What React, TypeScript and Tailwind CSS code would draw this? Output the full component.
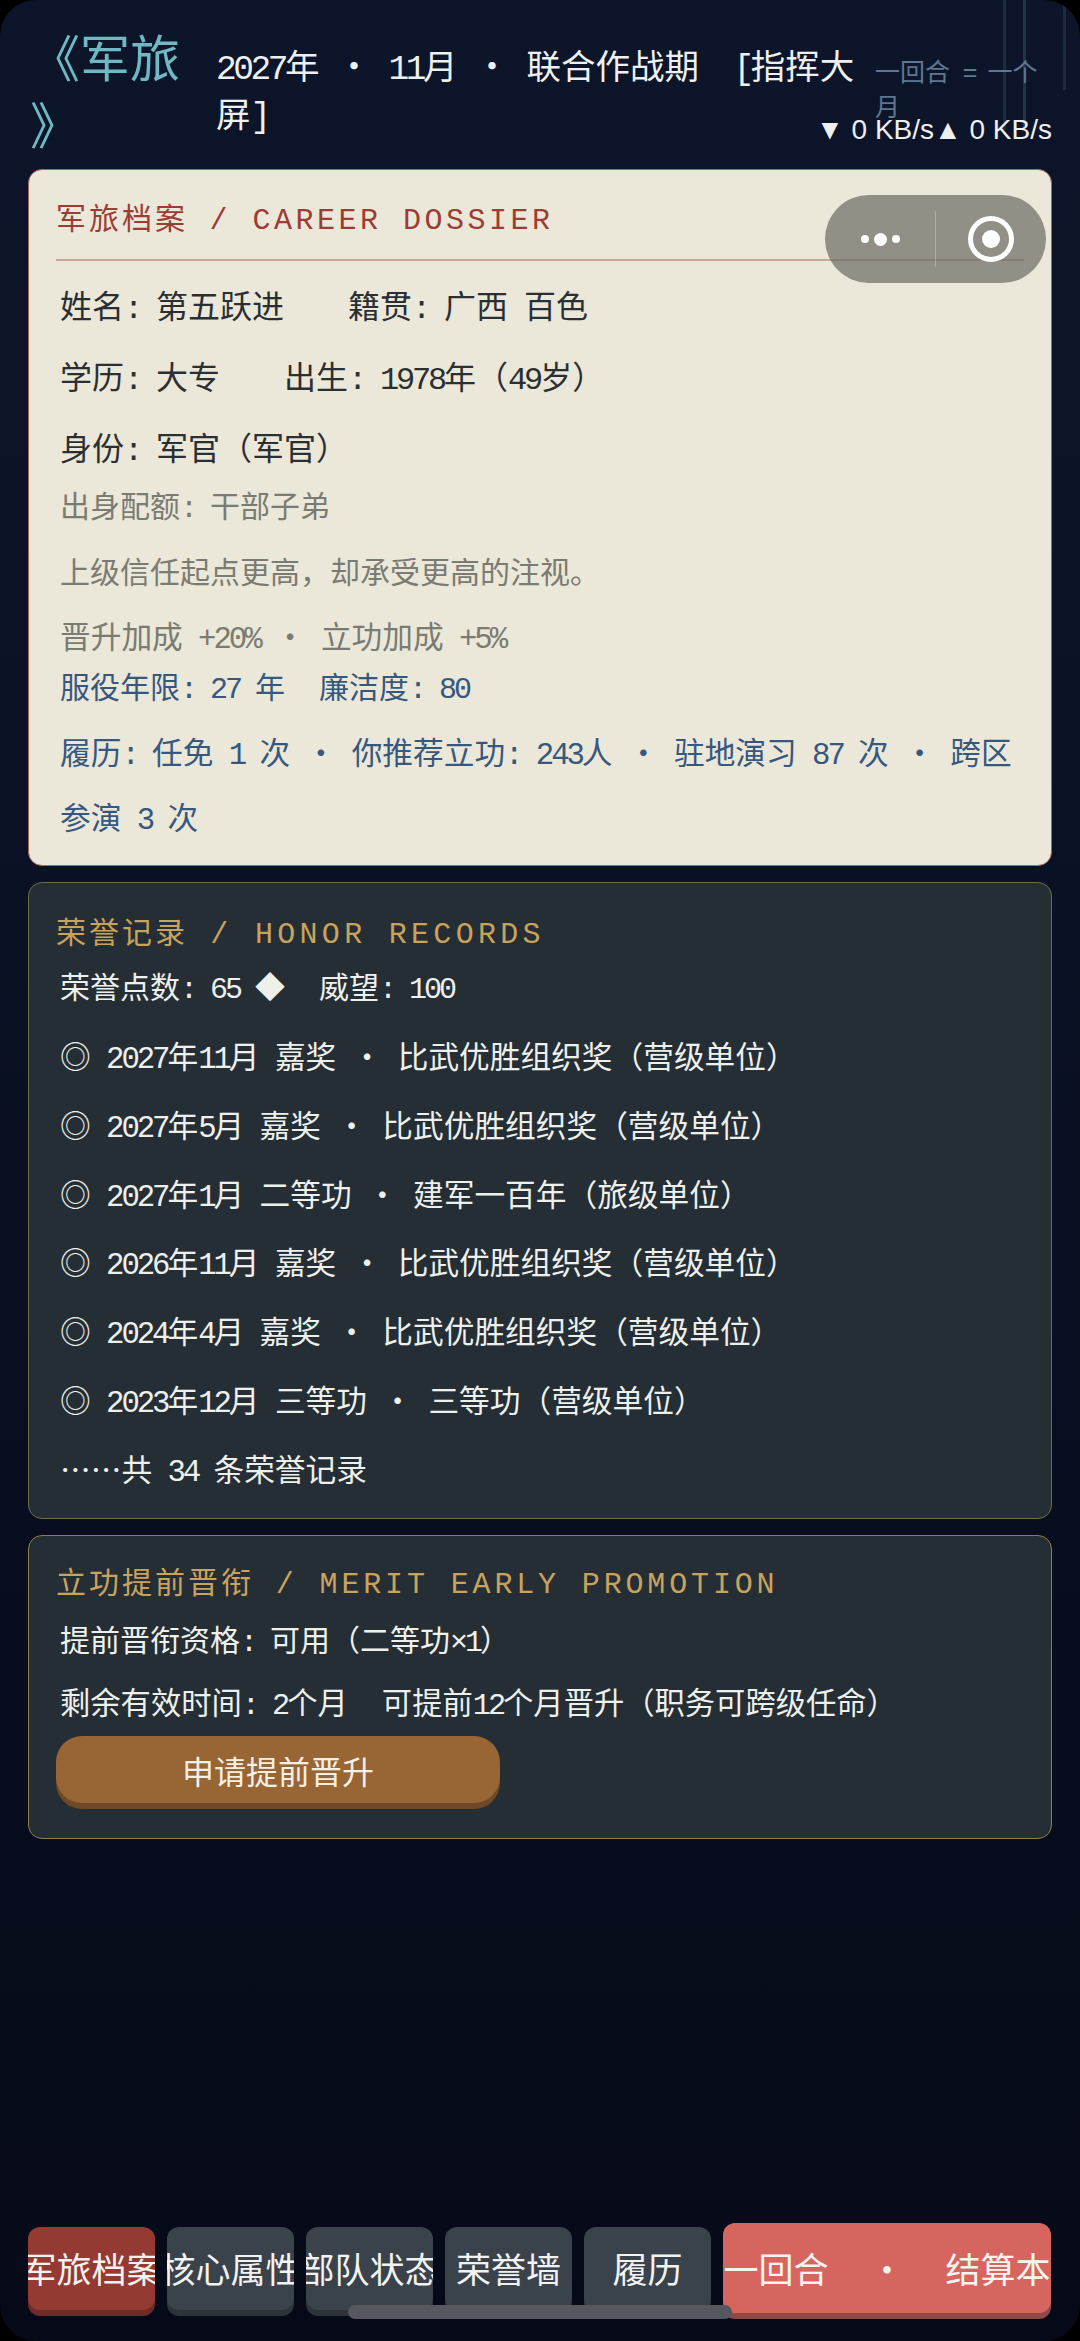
import React from "react";

const SANS = "font-['Noto_Sans_CJK_SC','Noto_Sans',sans-serif]";

function T({ s }: { s: string }) {
  const parts = s.split(/([\x20-\x7e×]+|·)/).filter(Boolean);
  return (
    <>
      {parts.map((p, i) =>
        p === "·" ? (
          <span key={i} className="inline-block w-[1em] text-center leading-none">·</span>
        ) : /^[\x20-\x7e×]+$/.test(p) ? (
          <span key={i} className="font-['Liberation_Mono',monospace] tracking-[-0.1em] leading-none whitespace-pre-wrap">{p}</span>
        ) : (
          <span key={i}>{p}</span>
        )
      )}
    </>
  );
}

function Title({ zh, en, color, track }: { zh: string; en: string; color: string; track: string }) {
  return (
    <div className={`whitespace-nowrap text-[30px] leading-[48px] tracking-[3px] ${color}`}>
      <span>{zh}</span>
      <span className={`font-['Liberation_Mono',monospace] leading-none ${track}`}> / {en}</span>
    </div>
  );
}

const honors = [
  "2027年11月 嘉奖 · 比武优胜组织奖\uFF08营级单位\uFF09",
  "2027年5月 嘉奖 · 比武优胜组织奖\uFF08营级单位\uFF09",
  "2027年1月 二等功 · 建军一百年\uFF08旅级单位\uFF09",
  "2026年11月 嘉奖 · 比武优胜组织奖\uFF08营级单位\uFF09",
  "2024年4月 嘉奖 · 比武优胜组织奖\uFF08营级单位\uFF09",
  "2023年12月 三等功 · 三等功\uFF08营级单位\uFF09",
];

const tabs = ["军旅档案", "核心属性", "部队状态", "荣誉墙", "履历"];

export default function App() {
  return (
    <div className="bg-black">
      <div className={`relative flex h-[2341px] w-[1080px] flex-col overflow-hidden rounded-[36px] bg-gradient-to-b from-[#0d152a] via-[#0a1022] to-[#060a18] ${SANS}`}>
        {/* decorative lines */}
        <div className="absolute left-[1003px] top-0 h-[130px] w-[3px] bg-[#1c2c40]" />
        <div className="absolute left-[1023px] top-0 h-[130px] w-[3px] bg-[#22344a]" />
        <div className="absolute left-[1063px] top-0 h-[90px] w-[3px] bg-[#1c2c40]" />

        {/* header */}
        <header className="flex h-[169px] pl-[30px] pr-[28px] pt-[22px]">
          <div className="w-[186px] shrink-0 pr-[30px] text-[50px] leading-[67px] text-[#6fb9c4] [line-break:anywhere]">《军旅》</div>
          <div className="w-[659px] shrink-0 pt-[18px] text-[34.5px] leading-[48px] text-[#eef0f0]">
            <T s="2027年 · 11月 · 联合作战期  [指挥大屏]" />
          </div>
          <div className="relative min-w-0 flex-1">
            <div className="w-[180px] pt-[31px] text-[25px] leading-[35px] text-[#5e7892]">
              <T s="一回合 = 一个月" />
            </div>
            <div className="absolute right-0 top-[91px] whitespace-nowrap font-['Liberation_Sans',sans-serif] text-[28px] leading-[34px] text-[#eef0f0]">▼ 0 KB/s▲ 0 KB/s</div>
          </div>
        </header>

        <main className="flex flex-col gap-[16px] px-[28px]">
          {/* dossier */}
          <section className="rounded-[14px] border border-[#a8655a] bg-[#ebe7d9] px-[27px] pb-[17px] pt-[22px]">
            <Title zh="军旅档案" en="CAREER DOSSIER" color="text-[#9b3d34]" track="tracking-[3.5px]" />
            <div className="mt-[19px] border-t-2 border-[#c9a79c]" />
            <div className="mt-[7px] px-[4px] text-[#2a2f33]">
              <div className="flex gap-[64px] text-[32px] leading-[72px]"><span><T s="姓名: 第五跃进" /></span><span><T s="籍贯: 广西 百色" /></span></div>
              <div className="flex gap-[64px] text-[32px] leading-[71px]"><span><T s="学历: 大专" /></span><span><T s={"出生: 1978年\uFF0849岁\uFF09"} /></span></div>
              <div className="text-[32px] leading-[71px]"><T s={"身份: 军官\uFF08军官\uFF09"} /></div>
              <div className="text-[30px] leading-[44px] text-[#7a7b72]"><T s="出身配额: 干部子弟" /></div>
              <div className="mt-[22px] text-[30px] leading-[44px] text-[#7a7b72]"><T s={"上级信任起点更高\uFF0C却承受更高的注视。"} /></div>
              <div className="mt-[21px] text-[30.7px] leading-[44px] text-[#7a7b72]"><T s="晋升加成 +20% · 立功加成 +5%" /></div>
              <div className="mt-[6px] flex gap-[34px] text-[30px] leading-[44px] text-[#36587f]"><span><T s="服役年限: 27 年" /></span><span><T s="廉洁度: 80" /></span></div>
              <div className="mt-[11px] text-[30.7px] leading-[65px] text-[#36587f]"><T s="履历: 任免 1 次 · 你推荐立功: 243人 · 驻地演习 87 次 · 跨区参演 3 次" /></div>
            </div>
          </section>

          {/* honors */}
          <section className="rounded-[14px] border border-[#6d6f48] bg-[#252e35] px-[27px] pb-[16px] pt-[23px]">
            <Title zh="荣誉记录" en="HONOR RECORDS" color="text-[#c9a35c]" track="tracking-[4.3px]" />
            <div className="mt-[9px] flex gap-[34px] px-[4px] text-[30px] leading-[44px] text-[#eef0ec]"><span><T s="荣誉点数: 65 ◆" /></span><span><T s="威望: 100" /></span></div>
            <div className="mt-[14px] flex flex-col px-[4px] text-[30.7px] text-[#eef0ec]">
              {honors.map((h) => (
                <div key={h} className="flex h-[68.7px] items-center whitespace-pre"><span><T s={`◎ ${h}`} /></span></div>
              ))}
              <div className="flex h-[69px] items-center whitespace-pre"><span><T s="……共 34 条荣誉记录" /></span></div>
            </div>
          </section>

          {/* merit */}
          <section className="rounded-[14px] border border-[#8f7c4d] bg-[#252e35] px-[27px] pb-[35px] pt-[20px]">
            <Title zh="立功提前晋衔" en="MERIT EARLY PROMOTION" color="text-[#c9a35c]" track="tracking-[3.85px]" />
            <div className="mt-[12px] px-[4px] text-[30px] leading-[44px] text-[#eef0ec]"><T s={"提前晋衔资格: 可用\uFF08二等功×1\uFF09"} /></div>
            <div className="mt-[19px] flex gap-[34px] whitespace-nowrap px-[4px] text-[30.3px] leading-[44px] text-[#eef0ec]"><span><T s="剩余有效时间: 2个月" /></span><span><T s={"可提前12个月晋升\uFF08职务可跨级任命\uFF09"} /></span></div>
            <button className="mt-[13px] block h-[67px] w-[444px] rounded-[26px] bg-[#986534] text-[32px] text-[#f5f0e6] shadow-[0_6px_0_#6f4826]">申请提前晋升</button>
          </section>
        </main>

        {/* bottom nav */}
        <nav className="mt-auto flex items-center gap-[12px] pb-[28px] pl-[28px] pr-[29px]">
          {tabs.map((t, i) => (
            <button key={t} className={`flex h-[83px] w-[127px] shrink-0 items-center justify-center whitespace-nowrap rounded-[12px] text-[35px] text-[#f2f2f0] ${i === 0 ? "bg-[#953a33] shadow-[0_6px_0_#6f2b28]" : "bg-[#3a424c] shadow-[0_6px_0_#2c3339]"}`}>
              <span className="w-[127px] shrink-0 overflow-hidden"><span className="flex justify-center"><span className="shrink-0">{t}</span></span></span>
            </button>
          ))}
          <button className="flex h-[90px] min-w-0 flex-1 items-center justify-center overflow-hidden whitespace-nowrap rounded-[12px] bg-[#d7655f] text-[35px] text-[#f8f4f0] shadow-[0_6px_0_#8f4a47]">
            <span className="shrink-0">下一回合</span>
            <span className="mx-[41px] shrink-0">·</span>
            <span className="shrink-0">结算本月</span>
          </button>
        </nav>

        {/* overlays */}
        <div className="absolute left-[348px] top-[2305px] h-[14px] w-[384px] rounded-full bg-[#55585f]" />
        <div className="absolute left-[825px] top-[195px] flex h-[88px] w-[221px] items-center rounded-full bg-[#6b6a62]/70">
          <div className="flex w-[110px] items-center justify-center gap-[5px]">
            <span className="h-[8px] w-[8px] rounded-full bg-white" />
            <span className="h-[13px] w-[13px] rounded-full bg-white" />
            <span className="h-[8px] w-[8px] rounded-full bg-white" />
          </div>
          <div className="h-[56px] w-px bg-white/25" />
          <div className="flex flex-1 items-center justify-center">
            <div className="flex h-[46px] w-[46px] items-center justify-center rounded-full border-[5px] border-white">
              <span className="h-[18px] w-[18px] rounded-full bg-white" />
            </div>
          </div>
        </div>
      </div>
    </div>
  );
}
